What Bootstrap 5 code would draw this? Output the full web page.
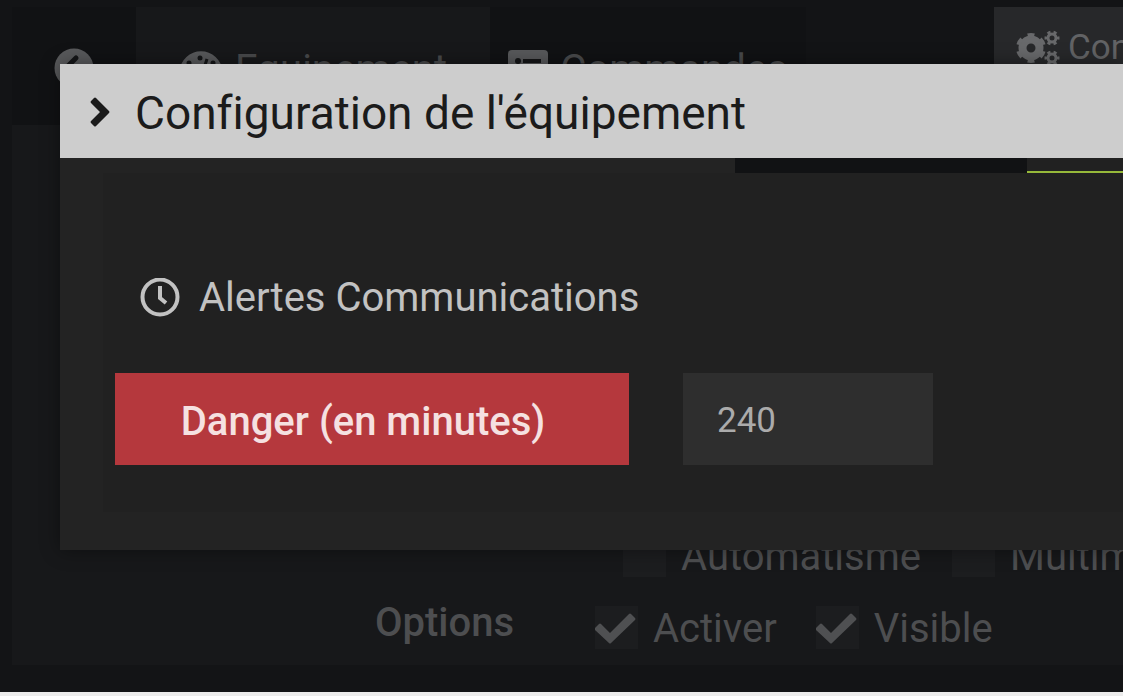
<!DOCTYPE html>
<html lang="fr">
<head>
<meta charset="utf-8">
<meta name="viewport" content="width=device-width, initial-scale=1">
<title>Configuration de l'équipement</title>
<link href="https://cdn.jsdelivr.net/npm/bootstrap@5.3.0/dist/css/bootstrap.min.css" rel="stylesheet">
<style>
  body { font-family: Roboto, "Liberation Sans", sans-serif; font-size: 40px; line-height: 48px; font-variant-ligatures: none; background: #131416; color: #4d4e50; }
  svg { flex: none; display: block; }
  .page { border-bottom: 4px solid #ececec; padding: 7px 0 27px 12px; }
  .tabs { height: 118px; }
  .tabs .nav-link { color: #48494b; padding: 4px 0 0; border-radius: 0; background: #111214; }
  .tabs .nav-link.active { background: #17181a; }
  .tab-back { width: 124px; }
  .tab-equip { width: 354px; }
  .tab-cmd { width: 316px; }
  .tabs .tab-equip, .tabs .tab-cmd { gap: 12px; }
  .tabs span { padding-top: 4px; }
  .btn-conf { background: #27282a; color: #626365; border: 0; border-radius: 0; font-size: 35px; line-height: 48px; width: 129px; padding: 17px 0 17px 22px; gap: 8px; }
  .panel { background: #17181a; padding-bottom: 14px; }
  .opt-label { width: 502px; font-weight: 500; line-height: 40px; }
  .opts { margin-left: 81px; gap: 39px; }
  .opts-cat { margin-left: 611px; gap: 31px; }
  .form-check { min-height: 0; margin: 0; padding: 0; gap: 15px; }
  .form-check label { padding-top: 2px; margin-bottom: -2px; }
  .form-check .form-check-input { float: none; flex: none; width: 43px; height: 43px; margin: 0; border: 0; border-radius: 0; background-color: #1c1d1f; background-size: contain; }
  .form-check .form-check-input:checked { background-color: #1c1d1f; background-image: url("data:image/svg+xml,%3Csvg xmlns='http://www.w3.org/2000/svg' viewBox='0 0 43 43'%3E%3Cpath d='M0 22L4 18Q5 17 6 18L15 27L34 8Q35 7 36 8L40 12Q41 13 40 14L16 37Q15 38 14 37L0 24Z' fill='%234f5052'/%3E%3C/svg%3E"); }
  .dialog-box { position: absolute; top: 64px; left: 60px; right: 0; background: #232323; box-shadow: 0 0 18px rgba(0,0,0,.4); padding-bottom: 38px; }
  .dialog-head { background: #cdcdcd; color: #1b1b1b; height: 94px; padding: 2px 30px 0; gap: 24px; }
  .dialog-head h1 { font-size: 46px; line-height: 56px; font-weight: 400; padding-top: 2px; }
  .strip { height: 15px; }
  .strip-dark { background: #111214; width: 292px; }
  .strip-active { background: #212121; border-bottom: 2px solid #96b93a; width: 96px; }
  .dialog-panel { margin-left: 43px; background: #212121; padding: 101px 12px 47px; }
  .dialog-panel h2 { font-size: 40px; line-height: 48px; font-weight: 400; color: #c2c2c2; gap: 19px; padding-left: 25px; margin-bottom: 51px; }
  .alert-label { width: 514px; height: 92px; background: #b5383d; color: #f5e1e1; font-weight: 500; padding: 6px 18px 0 0; }
  .delay { width: 250px; height: 92px; margin-left: 54px; padding: 2px 34px 0; border: 0; border-radius: 0; font-size: 35px; }
  .delay, .delay:focus { background: #2e2e2e; color: #ababab; }
</style>
</head>
<body>
<div class="position-relative min-vh-100 overflow-hidden d-flex flex-column page">
  <div class="d-flex align-items-start tabs">
    <ul class="nav flex-nowrap h-100">
      <li class="nav-item"><a href="#" aria-label="Retour" class="nav-link h-100 d-flex align-items-center justify-content-center tab-back">
        <svg width="40" height="40" viewBox="0 0 40 40"><circle cx="20" cy="20" r="19.500" fill="#58595b"/><path d="M22 10L12 20L22 30" fill="none" stroke="#151618" stroke-width="5" stroke-linecap="round"/></svg></a></li>
      <li class="nav-item"><a href="#" class="nav-link active h-100 d-flex align-items-center justify-content-center tab-equip">
        <svg width="44" height="36" viewBox="0 0 44 36"><path d="M5 36A21.500 21.500 0 1 1 39 36Z" fill="#58595b"/><g fill="#151618"><circle cx="10" cy="13" r="2.500"/><circle cx="21" cy="8" r="2.500"/><circle cx="8" cy="24" r="3"/><circle cx="36" cy="24" r="3"/><circle cx="34" cy="13" r="2.500"/><circle cx="22" cy="27" r="5"/></g><path d="M22 27L28 9" stroke="#151618" stroke-width="3"/></svg><span>Equipement</span></a></li>
      <li class="nav-item"><a href="#" class="nav-link h-100 d-flex align-items-center justify-content-center tab-cmd">
        <svg width="40" height="36" viewBox="0 0 40 36"><rect width="40" height="36" rx="4" fill="#58595b"/><g fill="#151618"><circle cx="10" cy="11" r="3"/><circle cx="10" cy="19" r="3"/><circle cx="10" cy="27" r="3"/><path d="M15 9h18v4H15zM15 17h18v4H15zM15 25h18v4H15z"/></g></svg><span>Commandes</span></a></li>
    </ul>
    <button type="button" class="btn ms-auto flex-shrink-0 overflow-hidden d-flex align-items-center justify-content-start text-nowrap btn-conf">
      <svg width="44" height="40" viewBox="0 0 44 40" fill="none" stroke="#68696b"><circle cx="15" cy="20" r="8.500" stroke-width="8"/><circle cx="15" cy="20" r="13" stroke-width="4" pathLength="60" stroke-dasharray="5 5" stroke-dashoffset="-2.500"/><g id="cog"><circle cx="36" cy="10" r="4" stroke-width="3"/><circle cx="36" cy="10" r="6" stroke-width="3" pathLength="60" stroke-dasharray="5 5" stroke-dashoffset="2.500"/></g><use href="#cog" y="20"/></svg>Configuration</button>
  </div>
  <div class="flex-grow-1 d-flex flex-column justify-content-end panel">
    <div class="d-flex text-nowrap opts-cat">
      <div class="form-check d-flex align-items-center"><input class="form-check-input" type="checkbox" id="auto"><label for="auto">Automatisme</label></div>
      <div class="form-check d-flex align-items-center"><input class="form-check-input" type="checkbox" id="multi"><label for="multi">Multimédia</label></div>
    </div>
    <div class="d-flex text-nowrap mt-4">
      <div class="text-end opt-label">Options</div>
      <div class="d-flex opts">
        <div class="form-check d-flex align-items-center"><input class="form-check-input" type="checkbox" id="act" checked><label for="act">Activer</label></div>
        <div class="form-check d-flex align-items-center"><input class="form-check-input" type="checkbox" id="vis" checked><label for="vis">Visible</label></div>
      </div>
    </div>
  </div>

  <section class="dialog-box" role="dialog" aria-labelledby="dlg-title">
    <header class="d-flex align-items-center dialog-head">
      <svg width="21" height="30" viewBox="0 0 21 30"><path d="M1 4L4 1Q5 0 6 1L19 14Q20 15 19 16L6 29Q5 30 4 29L1 26Q0 25 1 24L10 15L1 6Q0 5 1 4Z" fill="#1b1b1b"/></svg>
      <h1 class="m-0 text-nowrap" id="dlg-title">Configuration de l'équipement</h1>
    </header>
    <div class="d-flex justify-content-end strip"><div class="strip-dark"></div><div class="strip-active"></div></div>
    <div class="dialog-panel">
      <h2 class="d-flex align-items-center text-nowrap"><svg width="40" height="40" viewBox="0 0 40 40" fill="none" stroke="#c2c2c2"><circle cx="20" cy="19" r="17.500" stroke-width="4"/><path d="M20 8V20L26 25" stroke-width="4"/></svg>Alertes Communications</h2>
      <div class="d-flex">
        <label for="delay" class="d-flex align-items-center justify-content-center text-nowrap alert-label">Danger (en minutes)</label>
        <input id="delay" type="text" class="form-control shadow-none delay" value="240">
      </div>
    </div>
  </section>
</div>
<script src="https://cdn.jsdelivr.net/npm/bootstrap@5.3.0/dist/js/bootstrap.bundle.min.js"></script>
</body>
</html>
